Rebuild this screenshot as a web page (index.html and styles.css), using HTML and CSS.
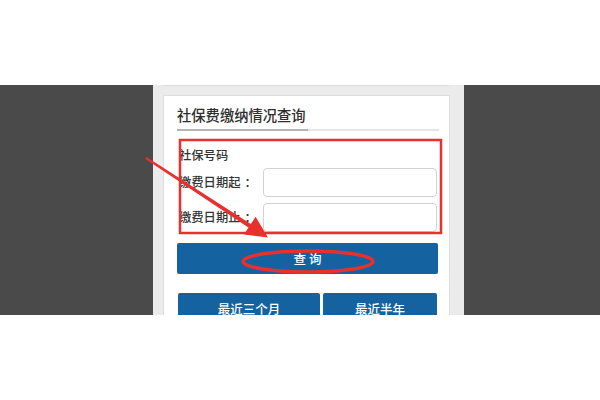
FILE: index.html
```html
<!DOCTYPE html>
<html lang="zh-CN">
<head>
<meta charset="utf-8">
<title>社保费缴纳情况查询</title>
<link rel="stylesheet" href="styles.css">
</head>
<body>
<div class="page">
  <div class="letterbox"></div>
  <div class="band">
    <div class="phone">
      <div class="prev-card"></div>
      <div class="card">
        <div class="title-row"><span class="title">社保费缴纳情况查询</span></div>
        <div class="form">
          <div class="field-label">社保号码</div>
          <div class="row">
            <label class="label">缴费日期起<span class="colon">：</span></label>
            <div class="input"></div>
          </div>
          <div class="row">
            <label class="label">缴费日期止<span class="colon">：</span></label>
            <div class="input"></div>
          </div>
        </div>
        <button class="btn btn-main">查 询</button>
        <div class="quick">
          <button class="btn">最近三个月</button>
          <button class="btn">最近半年</button>
        </div>
      </div>
    </div>
  </div>
  <div class="letterbox"></div>
  <svg class="marks" width="600" height="400" viewBox="0 0 600 400">
    <rect x="180" y="140" width="261" height="93" fill="none" stroke="#e8302d" stroke-width="2.5"/>
    <ellipse cx="308" cy="261.5" rx="65" ry="10.5" fill="none" stroke="#e8302d" stroke-width="3.5"/>
    <polygon points="145.4,158.9 146.6,157.1 251.2,224.2 248.8,227.8" fill="#e8302d"/>
    <polygon points="268,237.5 244,234.4 255.6,216.8" fill="#e8302d"/>
  </svg>
</div>
</body>
</html>
```

FILE: styles.css
```css
html, body {
  margin: 0;
  padding: 0;
  background: #ffffff;
}
.page {
  position: relative;
  width: 600px;
  height: 400px;
  overflow: hidden;
  font-family: "Noto Sans CJK SC", "Noto Sans", "Liberation Sans", sans-serif;
  color: #333333;
}
.letterbox {
  height: 85px;
  background: #ffffff;
}
.band {
  height: 230px;
  background: #4a4a4a;
  overflow: hidden;
  display: flex;
}
.phone {
  margin-left: 153px;
  width: 311px;
  background: #ebebeb;
  display: flex;
  flex-direction: column;
}
.prev-card {
  margin-left: 10px;
  width: 284px;
  height: 2px;
  background: #ffffff;
  border: 1px solid #dcdcdc;
  border-top: none;
}
.card {
  margin-top: 9px;
  margin-left: 10px;
  width: 262px;
  flex: 1;
  background: #ffffff;
  border: 1px solid #dedede;
  border-bottom: none;
  padding: 0 10px 0 13px;
}
.title-row {
  padding-top: 9px;
  border-bottom: 2px solid #e6e6e6;
  line-height: 0;
}
.title {
  display: inline-block;
  font-size: 14.3px;
  font-weight: 500;
  line-height: 20px;
  padding-bottom: 4px;
  padding-right: 2px;
  border-bottom: 2px solid #b4b4b4;
  margin-bottom: -2px;
  color: #2e2e2e;
}
.form {
  padding-left: 2px;
}
.field-label {
  margin-top: 14px;
  font-size: 12.3px;
  font-weight: 500;
  line-height: 20px;
}
.row {
  display: flex;
  align-items: center;
  height: 28px;
  margin-top: 3px;
}
.row + .row {
  margin-top: 7px;
}
.label {
  width: 84px;
  font-size: 12.3px;
  font-weight: 500;
  line-height: 20px;
}
.colon {
  display: inline-block;
  margin-left: 4px;
}
.input {
  width: 172px;
  height: 27px;
  border: 1px solid #d2d2d2;
  border-radius: 4px;
  background: #ffffff;
}
.btn {
  display: block;
  border: none;
  border-radius: 2px;
  background: #14629f;
  color: #ffffff;
  font-family: "Noto Sans CJK SC", "Noto Sans", "Liberation Sans", sans-serif;
  font-size: 12.5px;
  font-weight: 500;
  height: 31px;
  padding: 0;
  margin: 0;
}
.btn-main {
  width: 261px;
  margin-top: 12px;
}
.quick {
  display: grid;
  grid-template-columns: 142px 114px;
  gap: 3px;
  margin-top: 19px;
  padding-left: 1px;
}
.quick .btn {
  width: 100%;
}
.marks {
  position: absolute;
  left: 0;
  top: 0;
  pointer-events: none;
}
```
